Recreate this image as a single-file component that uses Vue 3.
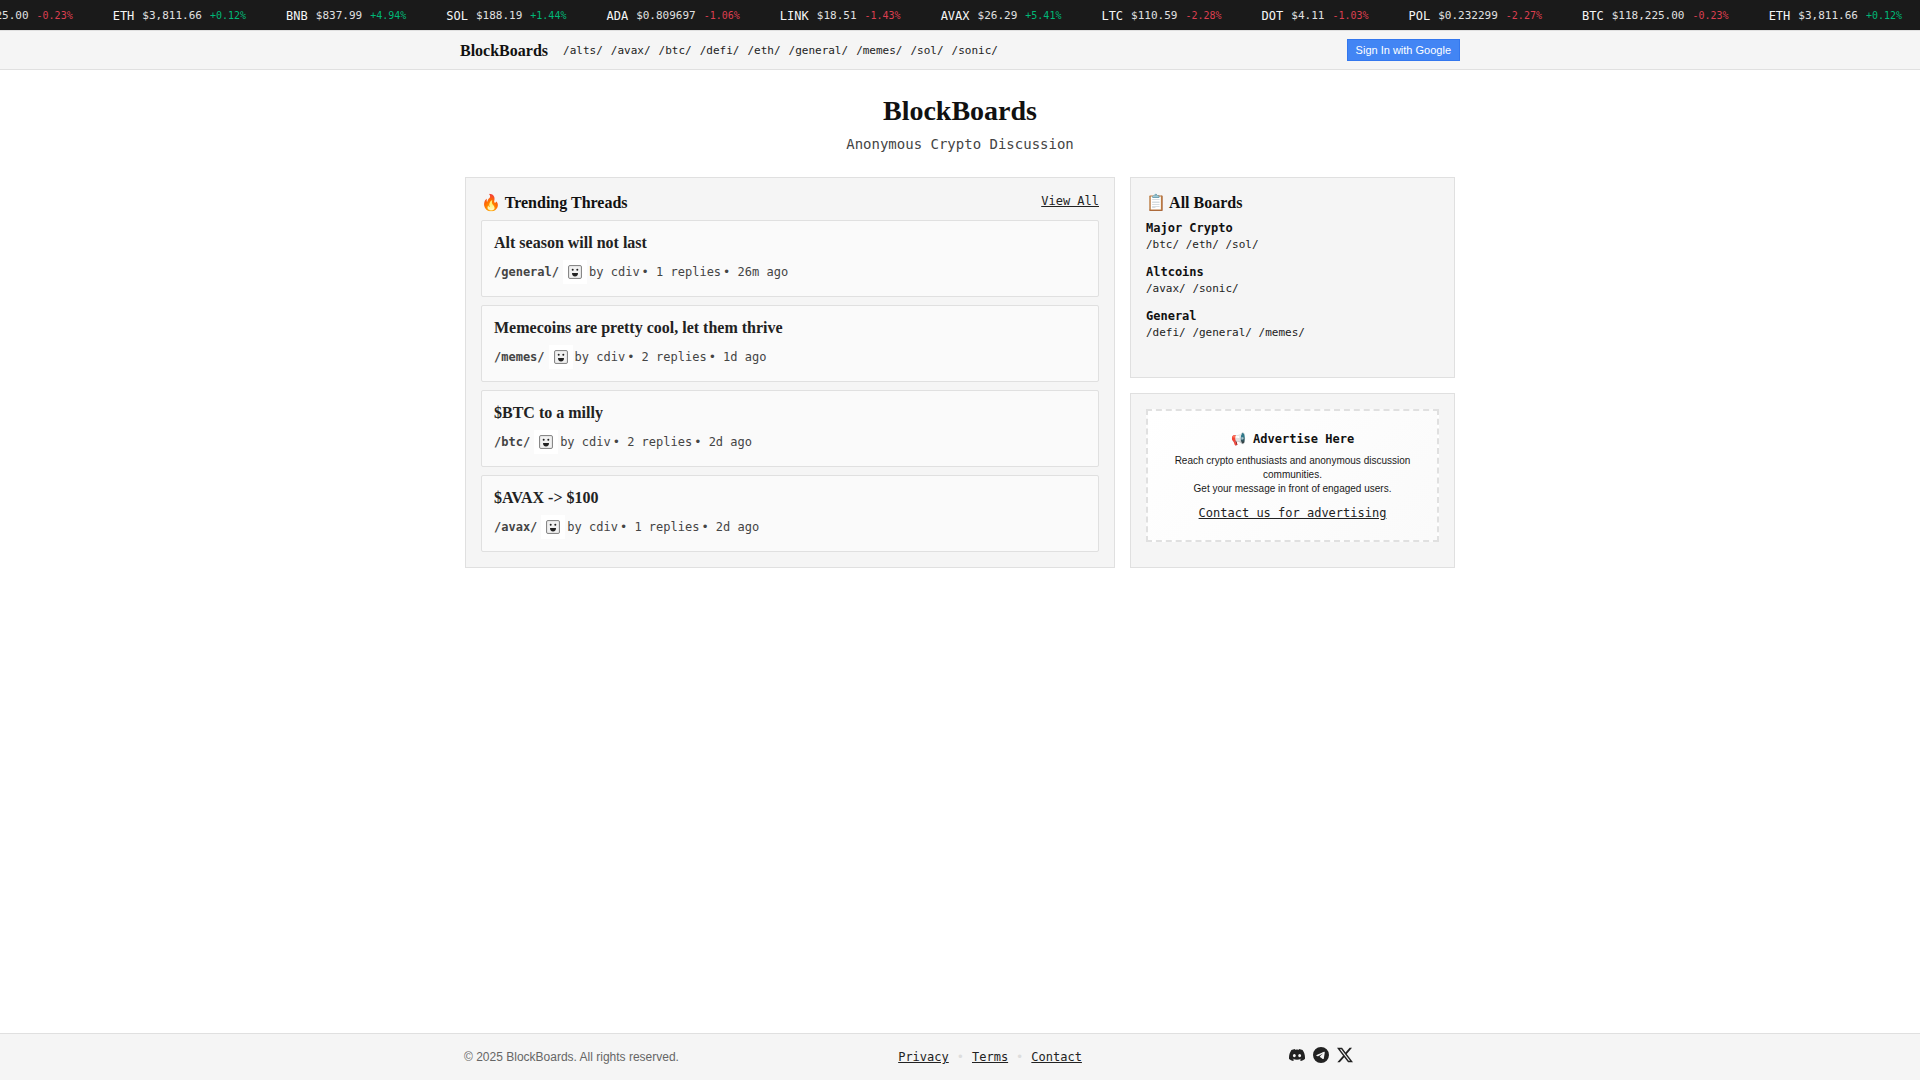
<template>
  <div class="page">
    <div class="ticker">
      <div class="ticker-track">
        <div v-for="(coin, index) in tickerItems" :key="index" class="ticker-item">
          <span class="ticker-symbol">{{ coin.symbol }}</span>
          <span class="ticker-price">${{ coin.price }}</span>
          <span class="ticker-change" :class="coin.change > 0 ? 'up' : 'down'">{{ formatChange(coin.change) }}</span>
        </div>
      </div>
    </div>

    <header class="navbar">
      <div class="navbar-inner">
        <a href="#" class="brand">BlockBoards</a>
        <nav class="nav-links">
          <a v-for="board in boards" :key="board" :href="'#' + board">/{{ board }}/</a>
        </nav>
        <button type="button" class="sign-in">Sign In with Google</button>
      </div>
    </header>

    <main class="main">
      <h1>BlockBoards</h1>
      <p class="subtitle">Anonymous Crypto Discussion</p>

      <div class="columns">
        <section class="card trending">
          <div class="card-header">
            <h2>🔥 Trending Threads</h2>
            <a href="#trending" class="view-all">View All</a>
          </div>
          <article v-for="thread in threads" :key="thread.title" class="thread">
            <h3>{{ thread.title }}</h3>
            <div class="thread-meta">
              <a :href="'#' + thread.board" class="thread-board">/{{ thread.board }}/</a>
              <svg class="avatar" viewBox="0 0 24 24" aria-hidden="true">
                <rect width="24" height="24" fill="#fff" />
                <rect x="5.5" y="5.5" width="13" height="13" rx="1.5" fill="#e6e6e6" stroke="#888" />
                <rect x="7" y="7" width="10" height="10" rx="1" fill="#f2f2f2" />
                <circle cx="9.7" cy="9.8" r="1" fill="#222" />
                <circle cx="14.3" cy="9.8" r="1" fill="#222" />
                <path d="M9 13h6a3 3.4 0 0 1-6 0z" fill="#222" />
              </svg>
              <span>by {{ thread.author }}</span>
              <span>• {{ thread.replies }} replies</span>
              <span>• {{ thread.age }} ago</span>
            </div>
          </article>
        </section>

        <aside class="sidebar">
          <section class="card">
            <div class="card-header">
              <h2>📋 All Boards</h2>
            </div>
            <div v-for="group in boardGroups" :key="group.name" class="board-group">
              <h4>{{ group.name }}</h4>
              <p>
                <template v-for="board in group.boards" :key="board"><a :href="'#' + board">/{{ board }}/</a>{{ ' ' }}</template>
              </p>
            </div>
          </section>

          <section class="card">
            <div class="ad">
              <h4>📢 Advertise Here</h4>
              <p>
                Reach crypto enthusiasts and anonymous discussion communities.<br>
                Get your message in front of engaged users.
              </p>
              <a href="#contact">Contact us for advertising</a>
            </div>
          </section>
        </aside>
      </div>
    </main>

    <footer class="footer">
      <div class="footer-inner">
        <span class="copyright">© 2025 BlockBoards. All rights reserved.</span>
        <nav class="footer-links">
          <a href="#privacy">Privacy</a>
          <span class="dot">•</span>
          <a href="#terms">Terms</a>
          <span class="dot">•</span>
          <a href="#contact">Contact</a>
        </nav>
        <div class="socials">
          <a v-for="social in socials" :key="social.name" :href="'#' + social.name" :aria-label="social.name">
            <svg viewBox="0 0 24 24" aria-hidden="true"><path :d="social.path" /></svg>
          </a>
        </div>
      </div>
    </footer>
  </div>
</template>

<script setup>
const coins = [
  { symbol: 'BTC', price: '118,225.00', change: -0.23 },
  { symbol: 'ETH', price: '3,811.66', change: 0.12 },
  { symbol: 'BNB', price: '837.99', change: 4.94 },
  { symbol: 'SOL', price: '188.19', change: 1.44 },
  { symbol: 'ADA', price: '0.809697', change: -1.06 },
  { symbol: 'LINK', price: '18.51', change: -1.43 },
  { symbol: 'AVAX', price: '26.29', change: 5.41 },
  { symbol: 'LTC', price: '110.59', change: -2.28 },
  { symbol: 'DOT', price: '4.11', change: -1.03 },
  { symbol: 'POL', price: '0.232299', change: -2.27 },
];

// the first coins come round again at the end of the strip
const tickerItems = [...coins, ...coins.slice(0, 2)];

const formatChange = (change) => (change > 0 ? '+' : '') + change.toFixed(2) + '%';

const boards = ['alts', 'avax', 'btc', 'defi', 'eth', 'general', 'memes', 'sol', 'sonic'];

const threads = [
  { title: 'Alt season will not last', board: 'general', author: 'cdiv', replies: 1, age: '26m' },
  { title: 'Memecoins are pretty cool, let them thrive', board: 'memes', author: 'cdiv', replies: 2, age: '1d' },
  { title: '$BTC to a milly', board: 'btc', author: 'cdiv', replies: 2, age: '2d' },
  { title: '$AVAX -> $100', board: 'avax', author: 'cdiv', replies: 1, age: '2d' },
];

const boardGroups = [
  { name: 'Major Crypto', boards: ['btc', 'eth', 'sol'] },
  { name: 'Altcoins', boards: ['avax', 'sonic'] },
  { name: 'General', boards: ['defi', 'general', 'memes'] },
];

const socials = [
  {
    name: 'discord',
    path: 'M20.317 4.37a19.79 19.79 0 0 0-4.885-1.515.074.074 0 0 0-.079.037c-.21.375-.444.865-.608 1.25a18.27 18.27 0 0 0-5.487 0 12.64 12.64 0 0 0-.617-1.25.077.077 0 0 0-.079-.037A19.74 19.74 0 0 0 3.677 4.37a.07.07 0 0 0-.032.027C.533 9.046-.32 13.58.099 18.058a.082.082 0 0 0 .031.056 19.9 19.9 0 0 0 5.993 3.03.078.078 0 0 0 .084-.028 14.1 14.1 0 0 0 1.226-1.994.076.076 0 0 0-.041-.106 13.1 13.1 0 0 1-1.872-.892.077.077 0 0 1-.008-.128c.126-.094.252-.192.372-.291a.074.074 0 0 1 .078-.01c3.927 1.793 8.18 1.793 12.061 0a.074.074 0 0 1 .079.009c.12.099.245.198.372.292a.077.077 0 0 1-.006.128 12.3 12.3 0 0 1-1.873.891.077.077 0 0 0-.041.107c.36.698.772 1.363 1.225 1.993a.076.076 0 0 0 .084.029 19.84 19.84 0 0 0 6.002-3.03.077.077 0 0 0 .032-.055c.5-5.177-.838-9.674-3.549-13.66a.061.061 0 0 0-.031-.028zM8.02 15.33c-1.182 0-2.157-1.085-2.157-2.419 0-1.333.956-2.419 2.157-2.419 1.21 0 2.176 1.096 2.157 2.42 0 1.333-.956 2.418-2.157 2.418zm7.975 0c-1.183 0-2.157-1.085-2.157-2.419 0-1.333.955-2.419 2.157-2.419 1.21 0 2.176 1.096 2.157 2.42 0 1.333-.946 2.418-2.157 2.418z',
  },
  {
    name: 'telegram',
    path: 'M12 0a12 12 0 1 0 0 24 12 12 0 0 0 0-24zm4.962 7.224c.1-.002.321.023.465.14a.506.506 0 0 1 .171.325c.016.093.036.306.02.472-.18 1.898-.962 6.502-1.36 8.627-.168.9-.499 1.201-.82 1.23-.696.065-1.225-.46-1.9-.902-1.056-.693-1.653-1.124-2.678-1.8-1.185-.78-.417-1.21.258-1.91.177-.184 3.247-2.977 3.307-3.23.007-.032.014-.15-.056-.212s-.174-.041-.249-.024c-.106.024-1.793 1.14-5.061 3.345-.48.33-.913.49-1.302.48-.428-.008-1.252-.241-1.865-.44-.752-.245-1.349-.374-1.297-.789.027-.216.325-.437.893-.663 3.498-1.524 5.83-2.529 6.998-3.014 3.332-1.386 4.025-1.627 4.476-1.635z',
  },
  {
    name: 'x',
    path: 'M18.901 1.153h3.68l-8.04 9.19L24 22.846h-7.406l-5.8-7.584-6.638 7.584H.474l8.6-9.83L0 1.154h7.594l5.243 6.932zM17.61 20.644h2.039L6.486 3.24H4.298z',
  },
];
</script>

<style>
body {
  margin: 0;
  background-color: #fff;
}
</style>

<style scoped>
.page {
  display: flex;
  flex-direction: column;
  min-height: 100vh;
  font-family: "DejaVu Sans Mono", monospace;
  font-size: 12px;
  line-height: 14px;
  color: #1a1a1a;
}

h1,
h2,
h3,
h4,
p {
  margin: 0;
}

a {
  color: #222;
}

.ticker {
  overflow: hidden;
  background-color: #1a1a1a;
  border-bottom: 1px solid #e0e0e0;
}

.ticker-track {
  display: flex;
  align-items: center;
  gap: 40px;
  width: max-content;
  padding: 9px 0 7px;
  transform: translateX(-74px);
}

.ticker-item {
  display: flex;
  align-items: center;
  gap: 8px;
  white-space: nowrap;
}

.ticker-symbol {
  color: #f5f5f5;
}

.ticker-price {
  font-size: 11px;
  color: #e0e0e0;
}

.ticker-change {
  font-size: 10px;
}

.up {
  color: #00b877;
}

.down {
  color: #dc3f50;
}

.navbar {
  background-color: #f5f5f5;
  border-bottom: 1px solid #e0e0e0;
}

.navbar-inner {
  display: flex;
  align-items: center;
  gap: 15px;
  max-width: 1000px;
  margin: 0 auto;
  padding: 8px 0;
}

.brand {
  padding-top: 2px;
  font-family: "Liberation Serif", serif;
  font-size: 16px;
  font-weight: bold;
  color: #111;
  text-decoration: none;
}

.nav-links {
  display: flex;
  flex: 1;
  gap: 8px;
  padding-top: 2px;
  font-size: 11px;
}

.nav-links a {
  text-decoration: none;
}

.sign-in {
  height: 22px;
  padding: 0 8px;
  border: 1px solid #3377ee;
  background-color: #4285f4;
  color: #fff;
  font-family: "Liberation Sans", sans-serif;
  font-size: 11px;
  cursor: pointer;
}

.main {
  flex: 1;
  box-sizing: border-box;
  width: 100%;
  max-width: 1000px;
  margin: 0 auto;
  padding: 25px 5px;
}

h1 {
  margin-bottom: 9px;
  font-family: "Liberation Serif", serif;
  font-size: 28px;
  line-height: 32px;
  text-align: center;
  color: #111;
}

.subtitle {
  margin-bottom: 24px;
  font-size: 14px;
  line-height: 17px;
  text-align: center;
  color: #444;
}

.columns {
  display: grid;
  grid-template-columns: 2fr 1fr;
  gap: 15px;
}

.card {
  padding: 15px;
  border: 1px solid #e0e0e0;
  background-color: #f5f5f5;
}

.card-header {
  display: flex;
  align-items: flex-start;
  justify-content: space-between;
  margin-bottom: 8px;
}

.view-all {
  line-height: 17px;
}

h2,
h3 {
  font-family: "Liberation Serif", serif;
  font-size: 16px;
  line-height: 19px;
}

h2 {
  color: #111;
}

.thread {
  padding: 12px;
  border: 1px solid #e0e0e0;
  border-radius: 2px;
  background-color: #fafafa;
}

.thread + .thread {
  margin-top: 8px;
}

h3 {
  margin-bottom: 8px;
  color: #222;
}

.thread-meta {
  display: flex;
  align-items: center;
  gap: 2px;
  color: #444;
}

.thread-board {
  margin-right: 2px;
  font-weight: bold;
  color: #444;
  text-decoration: none;
}

.avatar {
  width: 24px;
  height: 24px;
}

.sidebar {
  display: flex;
  flex-direction: column;
  gap: 15px;
}

.sidebar .card {
  flex: 1 0 auto;
}

.board-group {
  margin-bottom: 13px;
}

h4 {
  font-size: 12px;
  line-height: 16px;
  color: #111;
}

.board-group h4 {
  margin-bottom: 2px;
}

.board-group p {
  font-size: 11px;
  line-height: 13px;
}

.board-group a {
  text-decoration: none;
}

.ad {
  padding: 20px;
  border: 2px dashed #e0e0e0;
  background: linear-gradient(135deg, #fff, #fafafa);
  text-align: center;
}

.ad h4 {
  margin-bottom: 7px;
}

.ad p {
  margin-bottom: 10px;
  font-family: "Liberation Sans", sans-serif;
  font-size: 10px;
}

.footer {
  background-color: #f5f5f5;
  border-top: 1px solid #e0e0e0;
}

.footer-inner {
  display: grid;
  grid-template-columns: 33fr 39fr 27fr;
  align-items: center;
  max-width: 992px;
  margin: 0 auto;
  padding: 13px 0;
}

.copyright {
  font-family: "Liberation Sans", sans-serif;
  color: #666;
}

.footer-links {
  display: flex;
  justify-content: center;
  gap: 8px;
}

.dot {
  color: #ddd;
}

.socials {
  display: flex;
  justify-content: center;
  gap: 8px;
  padding-bottom: 4px;
}

.socials svg {
  display: block;
  width: 16px;
  height: 16px;
  fill: #222;
}
</style>
